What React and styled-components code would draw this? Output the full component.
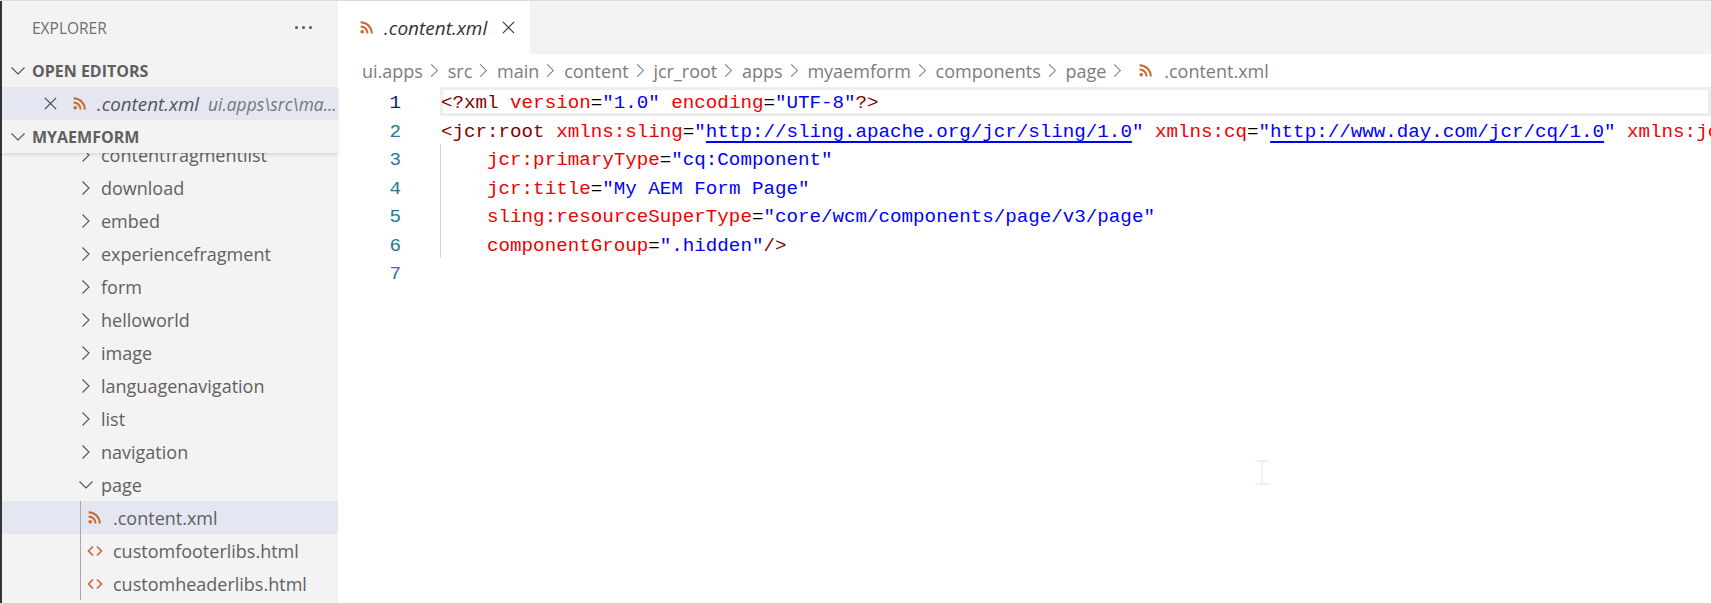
import React from 'react';
import styled, { createGlobalStyle } from 'styled-components';

const GlobalStyle = createGlobalStyle`
html, body {
    margin: 0;
    padding: 0;
    background: #fff;
    overflow: hidden;
}
`

const Window = styled.div`
    position: relative;
    display: flex;
    width: 1711px;
    height: 603px;
    overflow: hidden;
    border-top: 1px solid #dcdcdc;
    box-sizing: border-box;
    font-family: "Open Sans", "Noto Sans", sans-serif;
`

const Sidebar = styled.aside`
    display: flex;
    flex-direction: column;
    flex: 0 0 336px;
    border-left: 2px solid #333;
    background: #f3f3f3;
    color: #616161;
`

const SidebarTitle = styled.div`
    display: flex;
    align-items: center;
    justify-content: space-between;
    height: 53px;
    padding: 0 26px 0 30px;
    font-size: 15.5px;
    color: #6f6f6f;
`

const MoreDots = styled.div`
    display: flex;
    gap: 4px;
    span {
        width: 3px;
        height: 3px;
        border-radius: 50%;
        background: #555;
    }
`

const SectionHeader = styled.div`
    position: relative;
    z-index: 1;
    display: flex;
    align-items: center;
    gap: 6px;
    height: 33px;
    padding-left: 8px;
    font-size: 16px;
    font-weight: 700;
    color: #5f5f5f;
    box-shadow: ${p => p.$shadow ? '0 2px 3px rgba(0,0,0,0.1)' : 'none'};
    background: #f3f3f3;
`

const OpenEditorRow = styled.div`
    display: flex;
    align-items: center;
    height: 33px;
    padding-left: 41px;
    background: #e4e6f1;
    box-shadow: 0 1px 2px rgba(0,0,0,0.14);
    white-space: nowrap;
    overflow: hidden;
    svg { flex: none; }
    svg:first-child { margin-right: 15px; }
    em {
        margin-left: 11px;
        font-size: 18.8px;
        color: #555;
    }
    small {
        margin-left: 9px;
        font-size: 17.4px;
        font-style: italic;
        color: #777;
    }
`

const Tree = styled.div`
    flex: 1;
    overflow: hidden;
`

const TreeScroll = styled.div`
    margin-top: -15px;
`

const TreeRow = styled.div`
    display: flex;
    align-items: center;
    height: 33px;
    padding-left: ${p => p.$indent}px;
    background: ${p => p.$selected ? '#e4e6f1' : 'transparent'};
    font-size: 18px;
    color: #616161;
    svg { flex: none; }
`

const RowLabel = styled.span`
    margin-left: ${p => p.$gap}px;
    white-space: nowrap;
`

const ChildGroup = styled.div`
    position: relative;
    &::before {
        content: '';
        position: absolute;
        left: 78px;
        top: 0;
        bottom: 0;
        width: 1px;
        background: #a9a9a9;
    }
`

const Main = styled.main`
    display: flex;
    flex-direction: column;
    flex: 1;
    min-width: 0;
`

const TabBar = styled.div`
    display: flex;
    height: 53px;
    background: #f3f3f3;
`

const Tab = styled.div`
    display: flex;
    align-items: center;
    gap: 11px;
    width: 192px;
    box-sizing: border-box;
    padding-left: 22px;
    background: #fff;
    em {
        font-size: 19px;
        color: #333;
    }
    svg:last-child { margin-left: 3px; }
`

const Breadcrumbs = styled.nav`
    display: flex;
    align-items: center;
    height: 33px;
    padding-left: 24px;
    font-size: 18px;
    color: #7c7c7c;
    white-space: nowrap;
`

const Crumb = styled.span`
    display: flex;
    align-items: center;
    svg { margin: 0 5.8px 0 4px; }
`

const LastCrumb = styled.span`
    display: flex;
    align-items: center;
    gap: 12px;
    margin-left: 8px;
`

const Editor = styled.div`
    position: relative;
    display: flex;
    flex: 1;
    overflow: hidden;
`

const Gutter = styled.div`
    flex: 0 0 63px;
    padding-top: 2px;
    font-family: "Liberation Mono", monospace;
    font-size: 19.2px;
    line-height: 28.5px;
    text-align: right;
    color: #237893;
`

const LineNumber = styled.div`
    color: ${p => p.$active ? '#0b216f' : '#237893'};
`

const Code = styled.div`
    position: relative;
    flex: 1;
    min-width: 0;
    margin-left: 39px;
    font-family: "Liberation Mono", monospace;
    font-size: 19.2px;
    line-height: 28.5px;
    color: #000;
`

const CodeLine = styled.div`
    height: 28.5px;
    box-sizing: border-box;
    padding: 2px 0 0 1px;
    white-space: pre;
    box-shadow: ${p => p.$active ? 'inset 0 0 0 3px #eee' : 'none'};
`

const IndentGuide = styled.div`
    position: absolute;
    left: 0;
    top: 57px;
    width: 1px;
    height: 114px;
    background: #d3d3d3;
`

const Tag = styled.span`color: #800000;`
const Attr = styled.span`color: #f00000;`
const Str = styled.span`color: #0000ff;`
const Link = styled.span`
    color: #0000ff;
    text-decoration: underline;
    text-decoration-thickness: 2px;
    text-underline-offset: 4px;
`

const IBeam = styled.div`
    position: absolute;
    left: 1255px;
    top: 459px;
    width: 14px;
    height: 25px;
    border-top: 2px solid #f0f0f0;
    border-bottom: 2px solid #f0f0f0;
    box-sizing: border-box;
    &::after {
        content: '';
        position: absolute;
        left: 6px;
        top: 0;
        bottom: 0;
        width: 2px;
        background: #f0f0f0;
    }
`

const Chevron = ({ open, size = 16, color = '#555' }) => (
    <svg width={size} height={size} viewBox="0 0 16 16" fill="none" stroke={color} strokeWidth="1.1">
        {open ? <path d="M1.5 4.5 8 11l6.5-6.5" /> : <path d="M4.5 1.5 11 8l-6.5 6.5" />}
    </svg>
)

const Close = ({ size = 16, color = '#424242' }) => (
    <svg width={size} height={size} viewBox="0 0 16 16" fill="none" stroke={color} strokeWidth="1.2">
        <path d="M2 2l12 12M14 2 2 14" />
    </svg>
)

const RssIcon = ({ size = 13 }) => (
    <svg width={size} height={size} viewBox="0 0 13 13" fill="none" stroke="#c8682c" strokeWidth="2">
        <circle cx="2.2" cy="10.8" r="1.8" fill="#c8682c" stroke="none" />
        <path d="M0.6 5.4a7 7 0 0 1 7 7" />
        <path d="M0.6 1.2a11.2 11.2 0 0 1 11.2 11.2" />
    </svg>
)

const CodeIcon = () => (
    <svg width="16" height="14" viewBox="0 0 16 14" fill="none" stroke="#c8682c" strokeWidth="1.6">
        <path d="M6 2.5 1.5 7 6 11.5M10 2.5 14.5 7 10 11.5" />
    </svg>
)

const folders = ['contentfragmentlist', 'download', 'embed', 'experiencefragment', 'form', 'helloworld', 'image', 'languagenavigation', 'list', 'navigation'];
const crumbs = ['ui.apps', 'src', 'main', 'content', 'jcr_root', 'apps', 'myaemform', 'components', 'page'];

const App = () => {
    return (
        <Window>
            <GlobalStyle />
            <Sidebar>
                <SidebarTitle>
                    EXPLORER
                    <MoreDots><span /><span /><span /></MoreDots>
                </SidebarTitle>
                <SectionHeader><Chevron open />OPEN EDITORS</SectionHeader>
                <OpenEditorRow>
                    <Close size={15} />
                    <RssIcon />
                    <em>.content.xml</em>
                    <small>ui.apps\src\ma...</small>
                </OpenEditorRow>
                <SectionHeader $shadow><Chevron open />MYAEMFORM</SectionHeader>
                <Tree>
                    <TreeScroll>
                        {folders.map(name => (
                            <TreeRow key={name} $indent={76}>
                                <Chevron />
                                <RowLabel $gap={7}>{name}</RowLabel>
                            </TreeRow>
                        ))}
                        <TreeRow $indent={76}>
                            <Chevron open />
                            <RowLabel $gap={7}>page</RowLabel>
                        </TreeRow>
                        <ChildGroup>
                            <TreeRow $indent={86} $selected>
                                <RssIcon />
                                <RowLabel $gap={12}>.content.xml</RowLabel>
                            </TreeRow>
                            <TreeRow $indent={85}>
                                <CodeIcon />
                                <RowLabel $gap={10}>customfooterlibs.html</RowLabel>
                            </TreeRow>
                            <TreeRow $indent={85}>
                                <CodeIcon />
                                <RowLabel $gap={10}>customheaderlibs.html</RowLabel>
                            </TreeRow>
                        </ChildGroup>
                    </TreeScroll>
                </Tree>
            </Sidebar>
            <Main>
                <TabBar>
                    <Tab>
                        <RssIcon />
                        <em>.content.xml</em>
                        <Close size={15} color="#333" />
                    </Tab>
                </TabBar>
                <Breadcrumbs>
                    {crumbs.map(name => (
                        <Crumb key={name}>{name}<Chevron size={15} color="#777" /></Crumb>
                    ))}
                    <LastCrumb><RssIcon />.content.xml</LastCrumb>
                </Breadcrumbs>
                <Editor>
                    <Gutter>
                        {[1, 2, 3, 4, 5, 6, 7].map(n => (
                            <LineNumber key={n} $active={n === 1}>{n}</LineNumber>
                        ))}
                    </Gutter>
                    <Code>
                        <IndentGuide />
                        <CodeLine $active>
                            <Tag>&lt;?xml</Tag> <Attr>version</Attr>=<Str>"1.0"</Str> <Attr>encoding</Attr>=<Str>"UTF-8"</Str><Tag>?&gt;</Tag>
                        </CodeLine>
                        <CodeLine>
                            <Tag>&lt;jcr:root</Tag> <Attr>xmlns:sling</Attr>=<Str>"</Str><Link>http://sling.apache.org/jcr/sling/1.0</Link><Str>"</Str> <Attr>xmlns:cq</Attr>=<Str>"</Str><Link>http://www.day.com/jcr/cq/1.0</Link><Str>"</Str> <Attr>xmlns:jcr</Attr>=<Str>"</Str><Link>http://www.jcp.org/jcr/1.0</Link><Str>"</Str>
                        </CodeLine>
                        <CodeLine>{'    '}<Attr>jcr:primaryType</Attr>=<Str>"cq:Component"</Str></CodeLine>
                        <CodeLine>{'    '}<Attr>jcr:title</Attr>=<Str>"My AEM Form Page"</Str></CodeLine>
                        <CodeLine>{'    '}<Attr>sling:resourceSuperType</Attr>=<Str>"core/wcm/components/page/v3/page"</Str></CodeLine>
                        <CodeLine>{'    '}<Attr>componentGroup</Attr>=<Str>".hidden"</Str><Tag>/&gt;</Tag></CodeLine>
                    </Code>
                </Editor>
            </Main>
            <IBeam />
        </Window>
    )
};

export default App;
